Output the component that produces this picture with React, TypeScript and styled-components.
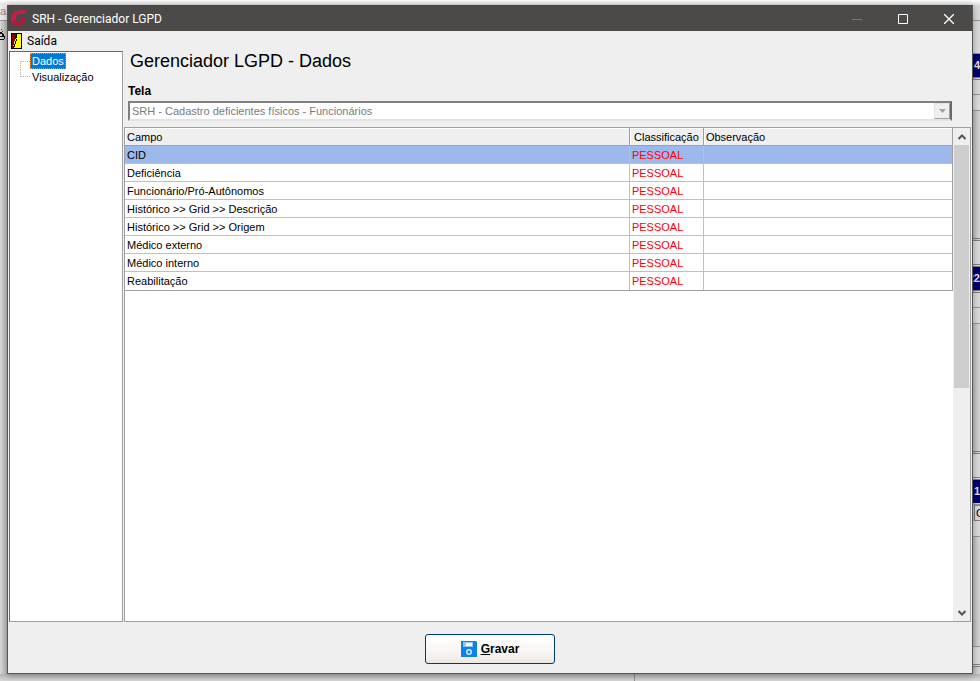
import React from "react";
import styled, { createGlobalStyle } from "styled-components";

const Global = createGlobalStyle`
  *, *::before, *::after { box-sizing: border-box; }
  html, body { margin: 0; height: 100%; }
  #root { height: 100%; }
  body {
    font-family: "Liberation Sans", Arial, sans-serif;
    font-size: 11px;
    line-height: 14px;
    color: #000;
    background: #cfcfcf;
    overflow: hidden;
  }
`;

const Desktop = styled.div`
  height: 100vh;
  display: grid;
  grid-template-columns: 7px minmax(0, 1fr) 7px;
  grid-template-rows: 5px minmax(0, 1fr) 7px;
  background: #d6d6d6;
`;

const TopEdge = styled.div`
  grid-column: 1 / -1;
  background: linear-gradient(#fdfdfd, #e4e4e4);
`;

const BottomEdge = styled.div`
  grid-column: 1 / -1;
  display: flex;
  justify-content: flex-end;
  background: linear-gradient(#b4b4b4, #d8d8d8);
`;

const BottomPane = styled.div`
  width: 346px;
  border-left: 1px solid #8c8c8c;
`;

const SideEdge = styled.div<{ $right?: boolean }>`
  display: flex;
  flex-direction: column;
  overflow: hidden;
  background: linear-gradient(
    to ${(p) => (p.$right ? "right" : "left")},
    #bcbcbc,
    #d8d8d8
  );
`;

const Strip = styled.div<{ $h: number; $light?: boolean; $lines?: boolean }>`
  flex: none;
  height: ${(p) => p.$h}px;
  background: ${(p) => (p.$light ? "#dadada" : "transparent")};
  border-bottom: ${(p) => (p.$lines ? "3px double #808080" : "1px solid #969696")};
`;

const NavyStrip = styled.div`
  flex: none;
  height: 23px;
  display: flex;
  justify-content: flex-end;
  background: #00006e;
  color: #e0e0e0;
  font-weight: bold;
  line-height: 23px;
  white-space: nowrap;
`;

const CellStrip = styled.div`
  flex: none;
  height: 16px;
  margin-left: 1px;
  padding-left: 1px;
  overflow: hidden;
  border: 1px solid #808080;
  border-right: 0;
  background: #dcdcdc;
`;

const EdgeText = styled.div`
  flex: none;
  height: 16px;
  color: #8a8a8a;
  line-height: 12px;
  background: #eee;
  border-bottom: 1px solid #9a9a9a;
`;

const Window = styled.main`
  display: flex;
  flex-direction: column;
  min-width: 0;
  border: 1px solid #555;
  border-top-color: #454442;
  background: #efefef;
  box-shadow: 0 1px 7px rgba(0, 0, 0, 0.35);
  z-index: 1;
`;

const TitleBar = styled.header`
  flex: none;
  height: 25px;
  display: flex;
  align-items: center;
  padding-left: 3px;
  background: #4b4a48;
  color: #fff;
`;

const Title = styled.h1`
  flex: 1;
  margin: 0 0 0 4px;
  font: 400 12px/16px Roboto, "Open Sans", sans-serif;
`;

const CaptionButton = styled.button`
  width: 46px;
  height: 25px;
  padding: 0;
  border: 0;
  display: flex;
  align-items: center;
  justify-content: center;
  background: transparent;
`;

const MenuBar = styled.nav`
  flex: none;
  height: 20px;
  display: flex;
`;

const MenuItem = styled.button`
  height: 20px;
  padding: 0 4px 0 3px;
  border: 0;
  display: flex;
  align-items: center;
  gap: 5px;
  background: transparent;
  font: 400 12px/16px Roboto, "Open Sans", sans-serif;
  color: #000;
`;

const Body = styled.div`
  flex: 1;
  min-height: 0;
  display: flex;
  gap: 1px;
  padding: 0 1px;
`;

const Tree = styled.ul`
  flex: none;
  width: 114px;
  margin: 0;
  padding: 1px 0 0 10px;
  list-style: none;
  border: 1px solid #a0a0a0;
  border-top-color: #696969;
  border-left-color: #696969;
  background: #fff;
`;

const TreeItem = styled.li<{ $last?: boolean }>`
  display: flex;
  height: 16px;
  &::before {
    content: "";
    width: 10px;
    height: ${(p) => (p.$last ? "8px" : "9px")};
    margin-top: ${(p) => (p.$last ? "0" : "8px")};
    border-left: 1px dotted #b4b4b4;
    border-top: ${(p) => (p.$last ? "0" : "1px dotted #b4b4b4")};
    border-bottom: ${(p) => (p.$last ? "1px dotted #b4b4b4" : "0")};
  }
`;

const TreeButton = styled.button<{ $selected?: boolean }>`
  height: 16px;
  padding: 0 1px;
  border: 1px ${(p) => (p.$selected ? "dotted #ff8728" : "solid transparent")};
  background: ${(p) => (p.$selected ? "#0078d7" : "transparent")};
  color: ${(p) => (p.$selected ? "#fff" : "#000")};
  font: 400 11px/14px "Liberation Sans", Arial, sans-serif;
`;

const Content = styled.section`
  flex: 1;
  min-width: 0;
  display: flex;
  flex-direction: column;
`;

const Form = styled.div`
  flex: none;
  display: flex;
  flex-direction: column;
  padding: 0 19px 6px 4px;
`;

const Heading = styled.h2`
  margin: 0 0 13px 2px;
  font-size: 18px;
  line-height: 20px;
  font-weight: 400;
`;

const Label = styled.label`
  margin-bottom: 3px;
  font-size: 12px;
  line-height: 14px;
  font-weight: bold;
`;

const SelectBox = styled.div`
  height: 20px;
  display: grid;
  border: 2px solid;
  border-color: #808080 #696969 #e3e3e3 #808080;
  background: #fff;
`;

const Select = styled.select`
  grid-area: 1 / 1;
  width: 100%;
  height: 16px;
  padding: 0 20px 0 2px;
  border: 0;
  appearance: none;
  background: transparent;
  color: #7a7a7a;
  opacity: 1;
  font: 400 11px/16px "Liberation Sans", Arial, sans-serif;
`;

const Arrow = styled.span`
  grid-area: 1 / 1;
  justify-self: end;
  width: 16px;
  display: flex;
  align-items: center;
  justify-content: center;
  border: 1px solid;
  border-color: #e3e3e3 #a0a0a0 #a0a0a0 #e3e3e3;
  background: #efefef;
  pointer-events: none;
`;

const GridFrame = styled.div`
  flex: 1;
  min-height: 0;
  display: flex;
  border: 1px solid #a0a0a0;
  background: #fff;
`;

const GridArea = styled.div`
  flex: 1;
  min-width: 0;
`;

const Table = styled.table`
  width: 100%;
  table-layout: fixed;
  border-collapse: separate;
  border-spacing: 0;
  border-right: 1px solid #a0a0a0;
  border-bottom: 1px solid #a0a0a0;
`;

const Col = styled.col<{ $w: string }>`
  width: ${(p) => p.$w};
`;

const Th = styled.th`
  height: 18px;
  padding: 0 2px;
  text-align: left;
  font-weight: 400;
  line-height: 14px;
  white-space: nowrap;
  background: #efefef;
  box-shadow: inset 1px 1px #fff;
  border-right: 1px solid #a0a0a0;
  border-bottom: 1px solid #a0a0a0;
  &:nth-child(2) { text-align: center; }
  &:last-child { border-right: 0; }
`;

const Row = styled.tr<{ $selected?: boolean }>`
  background: ${(p) => (p.$selected ? "#9db8eb" : "#fff")};
  &:last-child td { border-bottom: 0; }
`;

const Td = styled.td<{ $alert?: boolean }>`
  height: 18px;
  padding: 0 2px;
  line-height: 14px;
  white-space: nowrap;
  color: ${(p) => (p.$alert ? "#f00" : "#000")};
  border-right: 1px solid #c0c0c0;
  border-bottom: 1px solid #c0c0c0;
  &:last-child { border-right: 0; }
`;

const ScrollBar = styled.div`
  flex: none;
  width: 17px;
  padding: 0 1px;
  display: flex;
  flex-direction: column;
  background: #efefef;
`;

const ScrollButton = styled.button`
  flex: none;
  height: 17px;
  padding: 0;
  border: 0;
  display: flex;
  align-items: center;
  justify-content: center;
  background: transparent;
`;

const Track = styled.div`
  flex: 1;
`;

const Thumb = styled.div`
  height: 53%;
  background: #cdcdcd;
`;

const Footer = styled.footer`
  flex: none;
  height: 51px;
  display: flex;
  align-items: center;
  justify-content: center;
  padding-top: 3px;
`;

const SaveButton = styled.button`
  width: 130px;
  height: 30px;
  padding: 0;
  display: flex;
  align-items: center;
  justify-content: center;
  gap: 4px;
  border: 1px solid #003c74;
  border-radius: 3px;
  background: linear-gradient(#fff, #f8f6f4 60%, #ece8e4);
  color: #000;
  font: 700 12px/14px "Liberation Sans", Arial, sans-serif;
`;

const fields = [
  "CID",
  "Deficiência",
  "Funcionário/Pró-Autônomos",
  "Histórico >> Grid >> Descrição",
  "Histórico >> Grid >> Origem",
  "Médico externo",
  "Médico interno",
  "Reabilitação",
];

const Logo = () => (
  <svg width="17" height="17" viewBox="0 0 17 17" aria-hidden="true">
    <path d="M16 0 14 4H8Q5 4 5 8.500 5 12 8 12L6 16Q0 15 0 8.500 0 1 8 0.500Z" fill="#c41f48" />
    <path d="M1 12Q3 16.500 8 16.500 14 16.500 15.500 7H9L7.500 10H11Q10.500 12.500 8 12.500 5 12.500 4.500 9Z" fill="#a81c3e" />
  </svg>
);

const Door = () => (
  <svg width="11" height="16" viewBox="0 0 11 16" shapeRendering="crispEdges" aria-hidden="true">
    <path d="M0 0h11v16H0z" fill="#000" />
    <path d="M1 1h9v14H1z" fill="#ff0" />
    <path d="M1 1h4v2H4v5H3v4H2v3H1z" fill="#800000" />
    <path d="M5 1h1v4H5zM4 3h1v3H4zM5 6h1v2H5zM4 8h1v3H4zM3 11h1v3H3zM2 13h1v2H2z" fill="#000" />
  </svg>
);

const Disk = () => (
  <svg width="16" height="16" viewBox="0 0 16 16" aria-hidden="true">
    <path d="M0 0h15l1 1v15H0z" fill="#0a84e8" />
    <path d="M2 1h10v5H2z" fill="#8cc8f8" />
    <path d="M5 2h6v3H5z" fill="#fff" />
    <circle cx="8" cy="11" r="2.3" fill="none" stroke="#d4ecff" strokeWidth="1.5" />
  </svg>
);

export default function App() {
  return (
    <>
      <Global />
      <Desktop>
        <TopEdge />
        <SideEdge>
          <EdgeText>a</EdgeText>
          <svg width="7" height="36" viewBox="0 0 7 36" shapeRendering="crispEdges" aria-hidden="true">
            <path d="M0 11h2v1h1v1h1v2h1v3H4v1H1v-1h3v-2H0v-1h2v-2H0zM0 18h1v1H0z" fill="#111" />
            <path d="M1 8h1v1H1zM2 10h1v1H2z" fill="#c00" />
          </svg>
        </SideEdge>
        <Window>
          <TitleBar>
            <Logo />
            <Title>SRH - Gerenciador LGPD</Title>
            <CaptionButton aria-label="Minimizar" disabled>
              <svg width="10" height="10"><path d="M0 5.500h10" stroke="#777" /></svg>
            </CaptionButton>
            <CaptionButton aria-label="Maximizar">
              <svg width="10" height="10"><path d="M.5.5h9v9h-9z" fill="none" stroke="#fff" /></svg>
            </CaptionButton>
            <CaptionButton aria-label="Fechar">
              <svg width="10" height="10"><path d="M0 0l10 10M10 0L0 10" stroke="#fff" strokeWidth="1.3" /></svg>
            </CaptionButton>
          </TitleBar>
          <MenuBar>
            <MenuItem><Door />Saída</MenuItem>
          </MenuBar>
          <Body>
            <Tree>
              <TreeItem><TreeButton $selected>Dados</TreeButton></TreeItem>
              <TreeItem $last><TreeButton>Visualização</TreeButton></TreeItem>
            </Tree>
            <Content>
              <Form>
                <Heading>Gerenciador LGPD - Dados</Heading>
                <Label htmlFor="tela">Tela</Label>
                <SelectBox>
                  <Select id="tela" disabled>
                    <option>SRH - Cadastro deficientes físicos - Funcionários</option>
                  </Select>
                  <Arrow>
                    <svg width="7" height="4"><path d="M0 0h7L3.500 4z" fill="#a0a0a0" /></svg>
                  </Arrow>
                </SelectBox>
              </Form>
              <GridFrame>
                <GridArea>
                  <Table>
                    <colgroup>
                      <Col $w="auto" />
                      <Col $w="74px" />
                      <Col $w="30%" />
                    </colgroup>
                    <thead>
                      <tr><Th>Campo</Th><Th>Classificação</Th><Th>Observação</Th></tr>
                    </thead>
                    <tbody>
                      {fields.map((f, i) => (
                        <Row key={f} $selected={i === 0}>
                          <Td>{f}</Td><Td $alert>PESSOAL</Td><Td />
                        </Row>
                      ))}
                    </tbody>
                  </Table>
                </GridArea>
                <ScrollBar>
                  <ScrollButton aria-label="Rolar para cima">
                    <svg width="8" height="6"><path d="M.5 5L4 1.500 7.500 5" fill="none" stroke="#555" strokeWidth="2" /></svg>
                  </ScrollButton>
                  <Track><Thumb /></Track>
                  <ScrollButton aria-label="Rolar para baixo">
                    <svg width="8" height="6"><path d="M.5 1L4 4.500 7.500 1" fill="none" stroke="#555" strokeWidth="2" /></svg>
                  </ScrollButton>
                </ScrollBar>
              </GridFrame>
            </Content>
          </Body>
          <Footer>
            <SaveButton><Disk /><span><u>G</u>ravar</span></SaveButton>
          </Footer>
        </Window>
        <SideEdge $right>
          <Strip $h={16} $light />
          <Strip $h={33} $light />
          <NavyStrip>4</NavyStrip>
          <Strip $h={3} $lines />
          <Strip $h={15} $light />
          <Strip $h={16} $light />
          <Strip $h={130} $lines />
          <Strip $h={26} $light $lines />
          <NavyStrip>22</NavyStrip>
          <Strip $h={3} $lines />
          <Strip $h={15} $light />
          <Strip $h={16} $light />
          <Strip $h={130} $lines />
          <Strip $h={26} $light $lines />
          <NavyStrip>1</NavyStrip>
          <Strip $h={2} />
          <CellStrip>C</CellStrip>
          <Strip $h={16} $light />
          <Strip $h={110} />
          <Strip $h={20} $light $lines />
        </SideEdge>
        <BottomEdge><BottomPane /></BottomEdge>
      </Desktop>
    </>
  );
}
